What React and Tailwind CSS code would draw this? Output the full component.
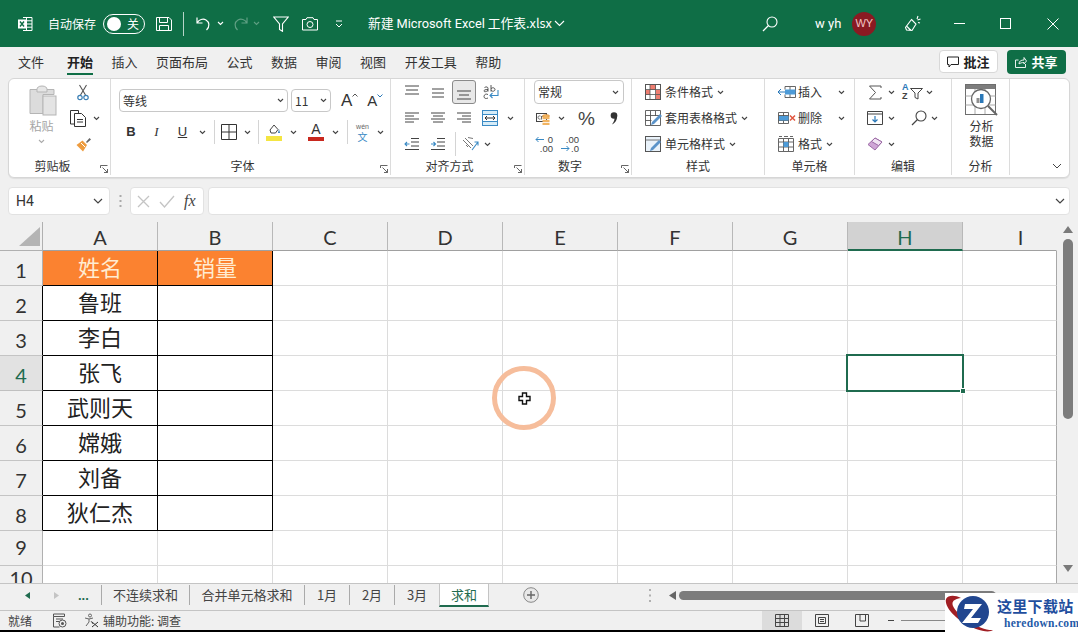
import React from 'react';

const cjk = { fontFamily: '"Noto Sans CJK SC", sans-serif' };

const names = ['姓名', '鲁班', '李白', '张飞', '武则天', '嫦娥', '刘备', '狄仁杰'];
const cols = ['A', 'B', 'C', 'D', 'E', 'F', 'G', 'H', 'I'];
const rowNums = [1, 2, 3, 4, 5, 6, 7, 8, 9, 10];
const menus = ['文件', '开始', '插入', '页面布局', '公式', '数据', '审阅', '视图', '开发工具', '帮助'];

function Svg({ w = 16, h = 16, vb, className = '', children }) {
  return (
    <svg width={w} height={h} viewBox={vb || `0 0 ${w} ${h}`} fill="none" className={`shrink-0 ${className}`}>
      {children}
    </svg>
  );
}

const Chev = ({ color = '#444', className = '' }) => (
  <Svg w={7} h={5} className={className}>
    <path d="M1 1l2.500 2.500L6 1" stroke={color} strokeWidth="1.100" />
  </Svg>
);

const Launcher = () => (
  <Svg w={8} h={8}>
    <path d="M.5 3V.5H7.500M7.500 7.500L2.500 2.500M7.500 4v3.500H4" stroke="#555" strokeWidth="0.900" />
  </Svg>
);

// title bar icons
const ExcelLogo = () => (
  <Svg w={16} h={16}>
    <path d="M6 1.500h9v13H6M9.500 1.500v13M6 4.800h9M6 8h9M6 11.200h9" stroke="#fff" strokeWidth="1" />
    <rect x="1" y="3.500" width="8" height="9" fill="#fff" />
    <path d="M3 5.500l4 5M7 5.500l-4 5" stroke="#0f6e46" strokeWidth="1.400" />
  </Svg>
);
const SaveIcon = () => (
  <Svg w={16} h={16}>
    <path d="M.5 1.500h12.500l2.500 2.500v10.500H.5zM3.500 1.500v5h8v-5M3.500 14.500v-5h9v5" stroke="#fff" strokeWidth="1" />
  </Svg>
);
const UndoIcon = ({ color = '#fff' }) => (
  <Svg w={15} h={16}>
    <path d="M1 1.500v5.500h5.500M1.300 6.800C3 3.500 7 2.300 10 4c3.500 2 4 6.500.5 10" stroke={color} strokeWidth="1.200" />
  </Svg>
);
const FilterIcon = () => (
  <Svg w={16} h={16}>
    <path d="M.8 1h14.400L9.500 8v7.300l-3-1.800V8z" stroke="#fff" strokeWidth="1.100" />
  </Svg>
);
const CameraIcon = () => (
  <Svg w={16} h={14}>
    <path d="M.5 2.500h3.500l1-1.800h6l1 1.800h3.500v10.500H.5z" stroke="#fff" strokeWidth="1" />
    <circle cx="8" cy="7.500" r="3" stroke="#fff" strokeWidth="1" />
  </Svg>
);
const SearchIcon = ({ color = '#fff' }) => (
  <Svg w={16} h={16}>
    <circle cx="10" cy="6" r="5" stroke={color} strokeWidth="1.100" />
    <path d="M6.500 9.500L1 15" stroke={color} strokeWidth="1.300" />
  </Svg>
);
const PenIcon = () => (
  <Svg w={16} h={18}>
    <path d="M6.500 4.500l4.500 4.500-4 6.500-5.500-.5-1-2.500zM2 11.500l4 4M13 1l-1 3M15.500 4l-3 1M15 8l-2-.5" stroke="#fff" strokeWidth="1.100" />
  </Svg>
);

// ribbon icons
const PasteIcon = () => (
  <Svg w={28} h={31}>
    <path d="M1 4.500h24v5H14v19H1z" fill="#dcdcdc" stroke="#b5b5b5" />
    <path d="M8 4.500c0-2 1.500-3.500 5-3.500s5 1.500 5 3.500v2.500H8z" fill="#e6e6e6" stroke="#b5b5b5" />
    <rect x="14" y="11" width="13" height="19" fill="#e4e4e4" stroke="#b5b5b5" />
  </Svg>
);
const CutIcon = () => (
  <Svg w={12} h={17}>
    <path d="M2.500 1l6 10M9.500 1l-6 10" stroke="#555" strokeWidth="1.100" />
    <circle cx="3" cy="13.500" r="2.200" stroke="#3a7fb5" strokeWidth="1.200" />
    <circle cx="9" cy="13.500" r="2.200" stroke="#3a7fb5" strokeWidth="1.200" />
  </Svg>
);
const CopyIcon = () => (
  <Svg w={16} h={17}>
    <path d="M4 14H.5V.5h8V3" stroke="#333" />
    <path d="M4.500 3.500h7l4 4v9h-11z" fill="#fff" stroke="#333" />
    <path d="M7 9.500h6M7 12h6" stroke="#333" />
  </Svg>
);
const BrushIcon = () => (
  <Svg w={16} h={15}>
    <path d="M10 5l3.500-4 1.500 1.500-4 3.500z" fill="#666" />
    <path d="M6.500 3.500L11 8l-4 6.500L.5 8z" fill="#ee9c3f" />
    <path d="M5 6l4 4" stroke="#fff" />
  </Svg>
);
const Lines = ({ rows }) => (
  <Svg w={16} h={16}>
    {rows.map((r, i) => (
      <path key={i} d={`M${r[0]} ${r[2]}H${r[1]}`} stroke="#444" strokeWidth="1" />
    ))}
  </Svg>
);
const WrapIcon = () => (
  <Svg w={16} h={17}>
    <path d="M15 6v5.500H7M9.500 9L7 11.500 9.500 14" stroke="#3a8ac4" strokeWidth="1.100" />
    <path d="M1.500 3.500c2-1.200 3.500-.5 3.500 1v3M5 5.500c-3 0-4 .5-4 1.500s2 1 4-.5M8 1v6.500M8 4.500c2-1.500 4-.5 4 1s-2 2.500-4 1M5 10.500c-2-1-4 0-4 2s2 2.500 4 1.500" stroke="#444" strokeWidth="0.900" />
  </Svg>
);
const MergeIcon = () => (
  <Svg w={16} h={16}>
    <rect x=".5" y=".5" width="15" height="15" stroke="#3a8ac4" fill="#d6ecf8" />
    <rect x=".5" y="4.500" width="15" height="7" fill="#fff" stroke="#3a8ac4" />
    <path d="M3 8h10M3 8l2-2M3 8l2 2M13 8l-2-2M13 8l-2 2" stroke="#333" />
  </Svg>
);
const IndentIcon = ({ flip }) => (
  <Svg w={16} h={14}>
    <path d="M7 1.500h8M7 5h8M7 9h8M1 12.500h14" stroke="#444" />
    <path d={flip ? 'M1 7h4.500M3.500 5l2 2-2 2' : 'M1 7h4.500M3 5L1 7l2 2'} stroke="#3a8ac4" strokeWidth="1.100" />
  </Svg>
);
const OrientIcon = () => (
  <Svg w={18} h={16}>
    <path d="M1 4l8 8M3 2l8 8M6 1.500l5 1M4 9l2 2" stroke="#777" />
    <path d="M10 14L16 6M12.500 6H16v3.500" stroke="#3a8ac4" strokeWidth="1.100" />
  </Svg>
);
const CurrencyIcon = () => (
  <Svg w={14} h={14}>
    <rect x=".5" y="2.500" width="10" height="8" fill="#fff" stroke="#444" />
    <path d="M4.500 5c-2-.5-2.500.5-2.500 1.500S3 8.500 4.500 8M5.500 5v3.500M5.500 6c1-1 2-1 2.500 0" stroke="#333" strokeWidth=".7" />
    <ellipse cx="10" cy="5" rx="3.500" ry="1.500" fill="#f2b461" stroke="#d98a2e" strokeWidth=".6" />
    <rect x="6.500" y="6" width="7" height="2.200" fill="#f2b461" />
    <rect x="6.500" y="9" width="7" height="2.200" fill="#f2b461" />
    <rect x="6.500" y="12" width="7" height="2" fill="#f2b461" />
  </Svg>
);
const Comma = () => (
  <Svg w={8} h={13}>
    <circle cx="4" cy="3.500" r="3.300" fill="#333" />
    <path d="M7 3.500C7.500 7 6 10.500 2 12.500 4 9.500 4.500 8 4.500 6z" fill="#333" />
  </Svg>
);
const DecimalIcon = ({ more }) => (
  <span className="relative flex h-[18px] w-[18px] flex-col items-end text-[9.500px] leading-[9px] text-[#444]" style={{ fontFamily: 'Liberation Sans' }}>
    {more ? <span>.00</span> : <span>0</span>}
    {more ? <span>.0</span> : <span>.00</span>}
    <Svg w={9} h={7} className={`absolute left-0 ${more ? 'top-[10px]' : 'top-[1px]'}`}>
      {more ? <path d="M0 3.500h8M5.500 1L8 3.500 5.500 6" stroke="#3a8ac4" /> : <path d="M1 3.500h8M3.500 1L1 3.500 3.500 6" stroke="#3a8ac4" />}
    </Svg>
  </span>
);
const CondIcon = () => (
  <Svg w={16} h={16}>
    <rect x=".5" y=".5" width="15" height="15" fill="#fff" stroke="#555" />
    <rect x="5" y="1" width="6" height="5" fill="#ee7d70" />
    <rect x="11" y="6" width="4" height="9" fill="#ee7d70" />
    <rect x="1" y="6" width="4" height="5" fill="#ee7d70" />
    <path d="M5 1v14M10.500 1v14M1 5.500h14M1 10.500h14" stroke="#555" strokeWidth=".8" />
  </Svg>
);
const TableFmtIcon = () => (
  <Svg w={18} h={17}>
    <path d="M.5.500h15v15H.5zM.5 5.500h15M.5 10.500h6M5.500 1v14M10.500 1v5" stroke="#555" strokeWidth=".9" />
    <path d="M6 15l1-3 8-8 2 2-8 8z" fill="#5a93c9" />
  </Svg>
);
const CellFmtIcon = () => (
  <Svg w={18} h={17}>
    <rect x=".5" y=".5" width="15" height="15" fill="#e9f2fa" stroke="#555" />
    <path d="M.5 4h15" stroke="#555" strokeWidth=".8" />
    <path d="M5 15l1-3 8-8 2 2-8 8z" fill="#5a93c9" />
  </Svg>
);
const InsertIcon = () => (
  <Svg w={18} h={14}>
    <path d="M7 1.500h10.500v11H7M7 1.500v3M7 9.500v3M12 2v10M7 7h10.500" stroke="#555" strokeWidth=".9" />
    <rect x="7" y="4.500" width="5" height="5" fill="#4d9bd8" />
    <rect x="12" y="4.500" width="5.500" height="5" fill="#4d9bd8" />
    <path d="M0 7h7M3 4L0 7l3 3" stroke="#2a78b8" />
  </Svg>
);
const DeleteIcon = () => (
  <Svg w={18} h={14}>
    <path d="M.5 1.500h10v11H.5zM.5 4.500h10M.5 9.500h10M5.500 2v10" stroke="#555" strokeWidth=".9" />
    <rect x="1" y="5" width="9.500" height="4.500" fill="#4d9bd8" />
    <path d="M12 4.500l5 5M17 4.500l-5 5" stroke="#e1563f" strokeWidth="1.500" />
  </Svg>
);
const FormatIcon = () => (
  <Svg w={16} h={16}>
    <path d="M.5 2.500h15v13H.5zM5.500 3v12M10.500 3v12M1 6h14M1 11h14M1 .5h3M6 .5h4M12 .5h3" stroke="#555" strokeWidth=".9" />
    <rect x="5.500" y="6" width="5" height="5" fill="#4d9bd8" />
  </Svg>
);
const SigmaIcon = () => (
  <Svg w={14} h={15}>
    <path d="M13 3V1H1.500l6 6.500-6 6.500H13v-2" stroke="#555" strokeWidth="1" />
  </Svg>
);
const SortIcon = () => (
  <span className="relative flex h-[18px] w-[21px]">
    <span className="flex w-[8px] flex-col text-[9px] font-bold leading-[9px]" style={{ fontFamily: 'Liberation Sans' }}>
      <span className="text-[#2a78b8]">A</span>
      <span className="text-[#444]">Z</span>
    </span>
    <Svg w={13} h={12} className="mt-[5px]">
      <path d="M.5 .5h12L8 5v6L5 9.500V5z" stroke="#444" />
    </Svg>
  </span>
);
const FillIcon = () => (
  <Svg w={16} h={14}>
    <path d="M.5.500h15v13H.5zM.5 3h15" stroke="#444" />
    <path d="M8 5v6M5.500 8.500L8 11l2.500-2.500" stroke="#2a78b8" strokeWidth="1.200" />
  </Svg>
);
const EraserIcon = () => (
  <Svg w={16} h={14}>
    <path d="M1 7.500L8 1l7 4-7 8z" fill="#cfa6d6" stroke="#9c6aa6" />
    <path d="M8 1l7 4-3.500 3.500-7-4z" fill="#f1e4f3" stroke="#9c6aa6" />
  </Svg>
);
const AnalyzeIcon = () => (
  <Svg w={33} h={33}>
    <rect x=".5" y=".5" width="30" height="30" fill="#fff" stroke="#6e6e6e" />
    <rect x="1" y="1" width="29" height="4" fill="#7d7d7d" />
    <path d="M.5 12h30M.5 21h30M10 5v25M20 5v25" stroke="#aaa" />
    <circle cx="16" cy="15" r="9.500" fill="#fff" stroke="#666" strokeWidth="1.300" />
    <rect x="11.500" y="14" width="3" height="5" fill="#8f8f8f" />
    <rect x="15" y="10" width="3.500" height="9" fill="#2a78b8" />
    <path d="M23 22l9 9" stroke="#666" strokeWidth="2" />
  </Svg>
);

function Group({ label, width, launcher, labelPad = '', children }) {
  return (
    <div className={`flex h-[96px] shrink-0 flex-col border-r border-[#dcdcdc] ${width}`}>
      <div className="h-[78px]">{children}</div>
      <div className={`relative flex h-[18px] items-center justify-center text-[12px] text-[#333] ${labelPad}`}>
        {label}
        {launcher && (
          <span className="absolute right-[2px] top-[8px] flex">
            <Launcher />
          </span>
        )}
      </div>
    </div>
  );
}

const Row = ({ className = '', children }) => <div className={`flex h-[26px] items-center ${className}`}>{children}</div>;

function StyleRow({ icon, text }) {
  return (
    <Row className="pl-[13px]">
      <span className="flex w-[20px]">{icon}</span>
      <span className="text-[12px] text-[#333]">{text}</span>
      <Chev className="ml-[4px]" />
    </Row>
  );
}

function CellRow({ icon, text, gap }) {
  return (
    <Row className="pl-[13px]">
      <span className="flex w-[20px]">{icon}</span>
      <span className="text-[12px] text-[#333]">{text}</span>
      <Chev className={gap} />
    </Row>
  );
}

function Ribbon() {
  return (
    <div className="mx-[8px] flex h-[100px] rounded-[6px] border border-[#d6d6d6] bg-white shadow-[0_1px_1px_rgba(0,0,0,0.08)]">
      <Group label="剪贴板" width="w-[102px]" launcher labelPad="pr-[14px]">
        <div className="flex">
          <div className="ml-[19px] flex w-[30px] flex-col items-center pt-[6px]">
            <PasteIcon />
            <span className="mr-[3px] mt-[1px] text-[12px] leading-[18px] text-[#a6a6a6]">粘贴</span>
            <Chev color="#aaa" className="mr-[3px] mt-[4px]" />
          </div>
          <div className="ml-[10px] flex flex-col">
            <Row className="pl-[9px]"><CutIcon /></Row>
            <Row className="pl-[2px]"><CopyIcon /><Chev className="ml-[7px]" /></Row>
            <Row className="pl-[8px]"><BrushIcon /></Row>
          </div>
        </div>
      </Group>

      <Group label="字体" width="w-[280px]" launcher labelPad="pr-[16px]">
        <div className="flex items-center gap-[3px] pl-[8px] pt-[10px]">
          <div className="flex h-[23px] w-[169px] items-center justify-between rounded-[4px] border border-[#c8c8c8] pl-[3px] pr-[3px] text-[12px] text-[#333]">
            等线 <Chev />
          </div>
          <div className="flex h-[23px] w-[40px] items-center justify-between rounded-[4px] border border-[#c8c8c8] pl-[3px] pr-[3px] text-[12px] text-[#333]">
            11 <Chev />
          </div>
          <span className="ml-[7px] flex items-start text-[17px] leading-none text-[#333]" style={{ fontFamily: 'Liberation Sans' }}>
            A<Svg w={6} h={4} className="mt-[1px]"><path d="M.5 3.500L3 1l2.500 2.500" stroke="#555" /></Svg>
          </span>
          <span className="ml-[6px] flex items-start text-[15px] leading-none text-[#333]" style={{ fontFamily: 'Liberation Sans' }}>
            A<Svg w={6} h={4} className="mt-[1px]"><path d="M.5 .5L3 3l2.500-2.500" stroke="#2a78b8" /></Svg>
          </span>
        </div>
        <div className="mt-[8px] flex h-[24px] items-center pl-[7px] text-[#333]">
          <span className="w-[26px] text-center text-[13px] font-bold" style={{ fontFamily: 'Liberation Sans' }}>B</span>
          <span className="w-[25px] text-center text-[13px] italic" style={{ fontFamily: 'Liberation Serif' }}>I</span>
          <span className="w-[27px] text-center text-[13px] underline" style={{ fontFamily: 'Liberation Sans' }}>U</span>
          <Chev className="ml-[3px]" />
          <span className="ml-[8px] h-[24px] w-px bg-[#d4d4d4]" />
          <Svg w={16} h={16} className="ml-[6px]">
            <path d="M.5.500h15v15H.5zM8 1v14M1 8h14" stroke="#333" />
          </Svg>
          <Chev className="ml-[7px]" />
          <span className="ml-[7px] h-[24px] w-px bg-[#d4d4d4]" />
          <Svg w={17} h={18} className="ml-[7px]">
            <path d="M4 7l4-5 4 4.500-2.500 3.500H5z" stroke="#444" />
            <path d="M13 6l1 4-2 0z" fill="#2a78b8" />
            <rect x="0" y="13" width="16" height="5" fill="#f4e542" />
          </Svg>
          <Chev className="ml-[7px]" />
          <div className="ml-[11px] flex w-[16px] flex-col items-center">
            <span className="text-[14px] leading-[13px] text-[#333]" style={{ fontFamily: 'Liberation Sans' }}>A</span>
            <span className="mt-[1px] h-[4px] w-[16px] bg-[#c8281e]" />
          </div>
          <Chev className="ml-[8px]" />
          <span className="ml-[8px] h-[24px] w-px bg-[#d4d4d4]" />
          <div className="ml-[7px] flex w-[15px] flex-col items-center">
            <span className="text-[7px] leading-[8px] text-[#666]" style={{ fontFamily: 'Liberation Sans' }}>wén</span>
            <span className="text-[10px] leading-[11px] text-[#3a8ac4]">文</span>
          </div>
          <Chev className="ml-[7px]" />
        </div>
      </Group>

      <Group label="对齐方式" width="w-[134px]" launcher labelPad="pr-[16px]">
        <div className="flex flex-col">
          <Row className="pl-[13px]">
            <span className="flex w-[26px]"><Lines rows={[[1, 15, 2], [2, 14, 6], [1, 15, 10]]} /></span>
            <span className="flex w-[22px]"><Lines rows={[[2, 14, 5], [2, 14, 9], [2, 14, 13]]} /></span>
            <span className="flex h-[24px] w-[24px] items-center justify-center rounded-[3px] border border-[#8a8a8a] bg-[#e8e8e8]">
              <Lines rows={[[1, 15, 7], [3, 13, 11], [1, 15, 15]]} />
            </span>
            <span className="ml-[7px] flex"><WrapIcon /></span>
          </Row>
          <Row className="pl-[13px]">
            <span className="flex w-[26px]"><Lines rows={[[1, 15, 3], [1, 10, 6], [1, 15, 9], [1, 10, 12]]} /></span>
            <span className="flex w-[26px]"><Lines rows={[[1, 15, 3], [3, 13, 6], [1, 15, 9], [3, 13, 12]]} /></span>
            <span className="flex w-[26px]"><Lines rows={[[1, 15, 3], [6, 15, 6], [1, 15, 9], [6, 15, 12]]} /></span>
            <MergeIcon />
            <Chev className="ml-[9px]" />
          </Row>
          <Row className="pl-[13px]">
            <span className="flex w-[26px]"><IndentIcon /></span>
            <span className="flex w-[25px]"><IndentIcon flip /></span>
            <span className="h-[24px] w-px bg-[#d4d4d4]" />
            <span className="ml-[6px] flex"><OrientIcon /></span>
            <Chev className="ml-[4px]" />
          </Row>
        </div>
      </Group>

      <Group label="数字" width="w-[107px]" launcher labelPad="pr-[16px]">
        <div className="flex flex-col">
          <Row className="pl-[9px]">
            <div className="flex h-[24px] w-[90px] items-center justify-between rounded-[4px] border border-[#c8c8c8] pl-[3px] pr-[4px] text-[12px] text-[#333]">
              常规 <Chev />
            </div>
          </Row>
          <Row className="pl-[11px]">
            <CurrencyIcon />
            <Chev className="ml-[8px]" />
            <span className="ml-[13px] text-[19px] leading-none text-[#444]" style={{ fontFamily: 'Liberation Sans' }}>%</span>
            <span className="ml-[15px] flex"><Comma /></span>
          </Row>
          <Row className="pl-[10px]">
            <DecimalIcon />
            <span className="ml-[8px] flex"><DecimalIcon more /></span>
          </Row>
        </div>
      </Group>

      <Group label="样式" width="w-[133px]">
        <div className="flex flex-col">
          <StyleRow icon={<CondIcon />} text="条件格式" />
          <StyleRow icon={<TableFmtIcon />} text="套用表格格式" />
          <StyleRow icon={<CellFmtIcon />} text="单元格样式" />
        </div>
      </Group>

      <Group label="单元格" width="w-[90px]">
        <div className="flex flex-col">
          <CellRow icon={<InsertIcon />} text="插入" gap="ml-[16px]" />
          <CellRow icon={<DeleteIcon />} text="删除" gap="ml-[16px]" />
          <CellRow icon={<FormatIcon />} text="格式" gap="ml-[4px]" />
        </div>
      </Group>

      <Group label="编辑" width="w-[97px]">
        <div className="flex flex-col">
          <Row className="pl-[13px]">
            <SigmaIcon /><Chev className="ml-[6px]" />
            <span className="ml-[7px] flex"><SortIcon /></span><Chev className="ml-[3px]" />
          </Row>
          <Row className="pl-[12px]">
            <FillIcon /><Chev className="ml-[5px]" />
            <span className="ml-[16px] flex"><SearchIcon color="#444" /></span><Chev className="ml-[4px]" />
          </Row>
          <Row className="pl-[12px]">
            <EraserIcon /><Chev className="ml-[5px]" />
          </Row>
        </div>
      </Group>

      <Group label="分析" width="w-[58px]">
        <div className="flex flex-col items-center pl-[2px] pt-[5px]">
          <AnalyzeIcon />
          <span className="mt-[1px] text-center text-[12px] leading-[15px] text-[#333]">分析<br />数据</span>
        </div>
      </Group>

      <div className="flex flex-1 items-end justify-end pb-[8px] pr-[7px]">
        <Svg w={10} h={6}><path d="M1 1l4 4 4-4" stroke="#444" /></Svg>
      </div>
    </div>
  );
}

function Sheet() {
  return (
    <div className="relative h-[361px] overflow-hidden bg-[#f0f0f0]">
      {/* column headers */}
      <div className="flex h-[29px]">
        <div className="flex h-[29px] w-[43px] shrink-0 items-start justify-end border-b border-r border-[#b0b0b0] pr-[2px] pt-[5px]">
          <Svg w={21} h={19}><path d="M21 0v19H0z" fill="#b4b4b4" /></Svg>
        </div>
        {cols.map((c) => (
          <div
            key={c}
            className={`flex h-[29px] items-center justify-center border-r pt-[2px] text-[20px] ${c === 'I' ? 'w-[94px] border-[#f0f0f0] pl-[22px] text-[#333]' : 'w-[115px] border-[#b8b8b8]'} ${c === 'H' ? 'border-b-2 border-b-[#1f6b4f] bg-[#d2d2d2] text-[#1f6b4f]' : 'border-b border-b-[#a0a0a0] text-[#333]'}`}
            style={{ fontFamily: 'Lato, sans-serif' }}
          >
            {c}
          </div>
        ))}
      </div>

      {/* rows */}
      {rowNums.map((n, i) => (
        <div key={n} className="flex h-[35px]">
          <div
            className={`flex h-[35px] w-[43px] shrink-0 justify-center overflow-hidden border-b border-r text-[20px] ${n === 10 ? 'leading-[24px]' : n === 9 ? 'pt-[2px] leading-[28px]' : 'pt-[5px] leading-[28px]'} ${n === 4 ? 'border-b-[#c0c0c0] bg-[#e2e2e2] text-[#1f6b4f]' : 'border-b-[#c4c4c4] text-[#333]'} ${n >= 2 && n <= 8 ? 'border-r-black' : 'border-r-[#b0b0b0]'}`}
            style={{ fontFamily: 'Lato, sans-serif' }}
          >
            {n}
          </div>
          {cols.map((c, ci) => {
            const inTable = i < 8 && ci < 2;
            const head = i === 0 && ci < 2;
            let text = null;
            if (i < 8 && ci === 0) text = names[i];
            if (i === 0 && ci === 1) text = '销量';
            return (
              <div
                key={c}
                className={`flex h-[35px] items-center justify-center border-b border-r pb-[4px] text-[22px] ${c === 'I' ? 'w-[94px] border-r-[#a8a8a8]' : 'w-[115px]'} ${inTable ? 'border-black' : 'border-[#dcdcdc]'} ${head ? 'bg-[#fb8230] text-[#ffecd2]' : 'bg-white text-[#222]'}`}
                style={cjk}
              >
                {text}
              </div>
            );
          })}
        </div>
      ))}

      {/* active cell */}
      <div className="absolute left-[846px] top-[132px] h-[38px] w-[118px] border-2 border-[#1f6b4f]" />
      <div className="absolute left-[960px] top-[166px] h-[6px] w-[6px] border border-white bg-[#1f6b4f]" />

      {/* vertical scrollbar */}
      <div className="absolute right-0 top-0 flex h-full w-[21px] flex-col items-center bg-[#f0f0f0]">
        <Svg w={10} h={7} className="mt-[4px]"><path d="M5 0l5 7H0z" fill="#7a7a7a" /></Svg>
        <div className="mt-[6px] h-[180px] w-[10px] rounded-full bg-[#7c7c7c]" />
        <Svg w={10} h={7} className="mt-[146px]"><path d="M0 0h10L5 7z" fill="#7a7a7a" /></Svg>
      </div>

      {/* click marker */}
      <div className="absolute left-[492px] top-[144px] flex h-[64px] w-[64px] items-center justify-center rounded-full border-[5px] border-[#f6bd9b]">
        <Svg w={13} h={13}>
          <path d="M4.500 1h4v3.500H12v4H8.500V12h-4V8.500H1v-4h3.500z" fill="#fff" stroke="#111" strokeWidth="1.400" />
        </Svg>
      </div>
    </div>
  );
}

function TabBar() {
  const tab = 'flex h-[20px] items-center justify-center border-l border-[#aaa] text-[13px] text-[#444]';
  return (
    <div className="flex h-[28px] items-start border-y border-[#c4c4c4] bg-[#f0f0f0]">
      <div className="flex h-[22px] w-[101px] items-center">
        <Svg w={5} h={7} className="ml-[25px]"><path d="M5 0v7L0 3.500z" fill="#1f6b4f" /></Svg>
        <Svg w={5} h={7} className="ml-[24px]"><path d="M0 0v7l5-3.500z" fill="#c4c4c4" /></Svg>
        <span className="ml-[19px] text-[13px] font-bold leading-none text-[#1f6b4f]" style={{ fontFamily: 'Liberation Sans' }}>...</span>
      </div>
      <div className="flex h-[22px] items-center">
        <div className={`${tab} w-[88px]`}>不连续求和</div>
        <div className={`${tab} w-[115px]`}>合并单元格求和</div>
        <div className={`${tab} w-[45px]`}>1月</div>
        <div className={`${tab} w-[45px]`}>2月</div>
        <div className={`${tab} w-[45px]`}>3月</div>
        <div className="flex h-[23px] w-[50px] items-center justify-center self-start border-x border-b-[2px] border-[#c4c4c4] border-b-[#1f6b4f] bg-white text-[13px] text-[#1f6b4f]">求和</div>
      </div>
      <div className="ml-[34px] flex h-[22px] items-center">
        <Svg w={16} h={16}>
          <circle cx="8" cy="8" r="7.300" fill="#e8e8e8" stroke="#888" />
          <path d="M8 4v8M4 8h8" stroke="#666" strokeWidth="1.400" />
        </Svg>
      </div>
      <div className="ml-[110px] flex h-[22px] items-center">
        <Svg w={2} h={13}><path d="M1 0v2M1 5.500v2M1 11v2" stroke="#b0b0b0" strokeWidth="2" /></Svg>
      </div>
      <div className="ml-[18px] flex h-[22px] flex-1 items-center">
        <Svg w={7} h={9}><path d="M7 0v9L0 4.500z" fill="#666" /></Svg>
        <div className="ml-[3px] h-[9px] w-[317px] rounded-full bg-[#7c7c7c]" />
      </div>
    </div>
  );
}

function StatusBar() {
  return (
    <div className="flex h-[19px] items-center bg-[#f0f0f0] text-[12px] text-[#444]">
      <span className="ml-[8px]">就绪</span>
      <Svg w={15} h={15} className="ml-[20px]">
        <path d="M1.500 1h11v2.500h-11zM1.500 3.500V14h6M4 6h7M4 8.500h3" stroke="#555" />
        <circle cx="10.500" cy="10.500" r="3.500" stroke="#555" />
        <circle cx="10.500" cy="10.500" r="1.500" fill="#555" />
      </Svg>
      <Svg w={15} h={15} className="ml-[17px]">
        <circle cx="6" cy="2.500" r="1.500" stroke="#666" />
        <path d="M1 5l4 1 4-1M5 6v3l-3 4M7 8l2 3" stroke="#666" />
        <path d="M8 9l6 5M14 9l-6 5" stroke="#333" />
      </Svg>
      <span className="ml-[4px]">辅助功能: 调查</span>
      <div className="ml-auto mr-[133px] flex items-center">
        <span className="flex h-[19px] w-[40px] items-center justify-center bg-[#dcdcdc]">
          <Svg w={14} h={13}><path d="M.5.500h13v12H.5zM5 1v11M9.500 1v11M1 4.500h12M1 8.500h12" stroke="#444" /></Svg>
        </span>
        <span className="flex w-[40px] justify-center">
          <Svg w={14} h={13}><path d="M.5.500h13v12H.5zM3.500 3.500h7v6h-7zM5 5.500h4M5 7.500h4" stroke="#444" /></Svg>
        </span>
        <span className="flex w-[40px] justify-center">
          <Svg w={14} h={13}><path d="M.5.500h13v12H.5zM5 1v6h5.500V1" stroke="#444" /></Svg>
        </span>
        <span className="ml-[6px] h-px w-[6px] bg-[#444]" />
        <span className="ml-[7px] h-px w-[44px] bg-[#888]" />
      </div>
    </div>
  );
}

function Watermark() {
  return (
    <div className="absolute bottom-0 right-0 flex h-[39px] w-[133px] bg-white">
      <Svg w={50} h={39}>
        <path d="M1 6c-2 8 10 22 30 30 8 3 15 3 17 1-12 1-36-14-40-24-2-5 2-7 8-8C10 2 3 2 1 6z" fill="#a11f24" />
        <circle cx="28" cy="19" r="16" fill="#21468f" />
        <path d="M20 11h17l-11 14h10l-3 5H17l11-14h-9z" fill="#fff" />
      </Svg>
      <div className="flex flex-col pl-[2px]">
        <span className="pt-[3px] text-[15px] font-bold leading-[20px] tracking-[0.3px] text-[#1f4e9e]" style={cjk}>这里下载站</span>
        <span className="ml-[7px] text-[11.500px] font-bold leading-[14px] tracking-[0.3px] text-[#1f5aa8]" style={{ fontFamily: '"Liberation Serif", serif' }}>heredown.com</span>
      </div>
    </div>
  );
}

export default function App() {
  return (
    <div className="relative h-[632px] w-[1078px] overflow-hidden bg-[#f0f0f0] text-[#333]" style={cjk}>
      {/* title bar */}
      <div className="flex h-[47px] items-center bg-[#0f6e46] text-white">
        <span className="ml-[17px] flex"><ExcelLogo /></span>
        <span className="ml-[15px] text-[12px]">自动保存</span>
        <div className="ml-[7px] flex h-[20px] w-[42px] items-center rounded-full border border-white pl-[3px]">
          <span className="h-[14px] w-[14px] rounded-full bg-white" />
          <span className="ml-[6px] text-[12px] leading-none">关</span>
        </div>
        <span className="ml-[11px] flex"><SaveIcon /></span>
        <span className="ml-[11px] h-[24px] w-px bg-white/70" />
        <span className="ml-[12px] flex"><UndoIcon /></span>
        <Chev color="#fff" className="ml-[6px]" />
        <span className="ml-[9px] flex -scale-x-100"><UndoIcon color="#5f9f83" /></span>
        <Chev color="#5f9f83" className="ml-[5px]" />
        <span className="ml-[13px] flex"><FilterIcon /></span>
        <span className="ml-[13px] flex"><CameraIcon /></span>
        <Svg w={8} h={8} className="ml-[17px]"><path d="M1 1h6M1 4l3 3 3-3" stroke="#fff" /></Svg>
        <span className="ml-[25px] text-[12.800px]">新建 <span style={{ fontFamily: 'Roboto, sans-serif' }}>Microsoft Excel</span> 工作表.xlsx</span>
        <Svg w={11} h={7} className="ml-[2px]"><path d="M1 1l4.500 4.500L10 1" stroke="#fff" strokeWidth="1.100" /></Svg>
        <span className="ml-[197px] flex"><SearchIcon /></span>
        <span className="ml-[37px] text-[13px]" style={{ fontFamily: 'Roboto, sans-serif' }}>w yh</span>
        <span className="ml-[11px] flex h-[24px] w-[24px] items-center justify-center rounded-full bg-[#8a1a22] text-[11px] text-[#f3c4c4]" style={{ fontFamily: 'Liberation Sans' }}>WY</span>
        <span className="ml-[29px] flex"><PenIcon /></span>
        <span className="ml-[33px] h-px w-[11px] bg-white" />
        <span className="ml-[35px] h-[11px] w-[11px] border border-white" />
        <Svg w={12} h={12} className="ml-[36px]"><path d="M.5.500l11 11M11.500.500l-11 11" stroke="#fff" /></Svg>
      </div>

      {/* menu row */}
      <div className="flex h-[31px] items-center bg-[#f0f0f0] pb-[2px] pl-[18px]">
        <div className="flex gap-[18.500px]">
          {menus.map((m) => (
            <span
              key={m}
              className={`relative text-[13px] leading-[20px] ${m === '开始' ? 'ml-[4.500px] font-bold text-[#222]' : 'text-[#333]'}`}
            >
              {m}
              {m === '开始' && <span className="absolute -bottom-[3px] left-0 h-[2px] w-full bg-[#0f6e46]" />}
            </span>
          ))}
        </div>
        <div className="ml-auto mr-[12px] flex items-center gap-[9px] text-[13px] font-bold">
          <div className="flex h-[23px] w-[59px] items-center justify-center gap-[4px] rounded-[4px] border border-[#d8d8d8] bg-white text-[#222]">
            <Svg w={12} h={12}><path d="M.5 1h11v7.500H4L2 11V8.500H.5z" stroke="#222" /></Svg>
            批注
          </div>
          <div className="flex h-[24px] w-[59px] items-center justify-center gap-[4px] rounded-[4px] bg-[#0f6e46] text-white">
            <Svg w={12} h={12}><path d="M.5 4h3M.5 4v7.500h10V8M4 8c0-3 2-4 5-4V1.500L11.500 5 9 8V6.500C7 6.500 5 7 4 8z" stroke="#fff" strokeWidth=".9" /></Svg>
            共享
          </div>
        </div>
      </div>

      <Ribbon />

      {/* formula bar */}
      <div className="mx-[8px] mt-[9px] flex h-[28px] items-center text-[#333]">
        <div className="flex h-[28px] w-[102px] items-center justify-between rounded-[4px] border border-[#e2e2e2] bg-white pl-[7px] pr-[6px] text-[14px]" style={{ fontFamily: 'Roboto, sans-serif' }}>
          H4
          <Svg w={10} h={6}><path d="M1 1l4 4 4-4" stroke="#444" strokeWidth="1.200" /></Svg>
        </div>
        <Svg w={3} h={12} className="ml-[9px]"><path d="M1.500 0v2M1.500 5v2M1.500 10v2" stroke="#aaa" strokeWidth="2" /></Svg>
        <div className="ml-[8px] flex h-[28px] w-[74px] items-center rounded-[4px] border border-[#e2e2e2] bg-white pl-[6px]">
          <Svg w={13} h={13}><path d="M1 1l11 11M12 1L1 12" stroke="#c4c4c4" strokeWidth="1.300" /></Svg>
          <Svg w={16} h={13} className="ml-[9px]"><path d="M1 7l4.500 5L15 1" stroke="#c4c4c4" strokeWidth="1.300" /></Svg>
          <span className="ml-[9px] text-[16px] italic text-[#444]" style={{ fontFamily: 'Liberation Serif' }}>fx</span>
        </div>
        <div className="ml-[4px] flex h-[28px] flex-1 items-center justify-end rounded-[4px] border border-[#e2e2e2] bg-white pr-[4px]">
          <Svg w={10} h={6}><path d="M1 1l4 4 4-4" stroke="#444" strokeWidth="1.200" /></Svg>
        </div>
      </div>

      <div className="h-[7px]" />
      <Sheet />
      <TabBar />
      <StatusBar />
      <div className="absolute bottom-0 left-0 h-[2px] w-full bg-black" />
      <Watermark />
    </div>
  );
}
